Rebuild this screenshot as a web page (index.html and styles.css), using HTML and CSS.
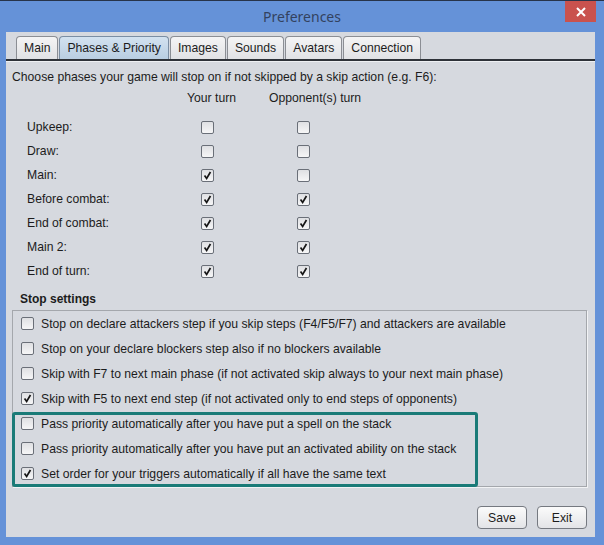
FILE: index.html
```html
<!DOCTYPE html>
<html>
<head>
<meta charset="utf-8">
<link rel="stylesheet" href="styles.css">
</head>
<body>
<div class="window">
  <div class="titlebar">
    <div></div>
    <div class="title">Preferences</div>
    <div class="close"><svg width="10" height="10" viewBox="0 0 10 10"><path d="M1 1L9 9M9 1L1 9" stroke="#fff" stroke-width="2"/></svg></div>
  </div>
  <div class="content">
    <div class="tabs">
      <div class="tab">Main</div>
      <div class="tab active">Phases &amp; Priority</div>
      <div class="tab">Images</div>
      <div class="tab">Sounds</div>
      <div class="tab">Avatars</div>
      <div class="tab">Connection</div>
    </div>
    <div class="panel">
      <div class="intro">Choose phases your game will stop on if not skipped by a skip action (e.g. F6):</div>
      <div class="heads"><span class="h1">Your turn</span><span class="h2">Opponent(s) turn</span></div>
      <div class="phases">
        <div class="lbl">Upkeep:</div><span class="cb"></span><span class="cb"></span>
        <div class="lbl">Draw:</div><span class="cb"></span><span class="cb"></span>
        <div class="lbl">Main:</div><span class="cb"><svg viewBox="0 0 13 13"><path d="M3 6.4L5.5 10L10 2.4" /></svg></span><span class="cb"></span>
        <div class="lbl">Before combat:</div><span class="cb"><svg viewBox="0 0 13 13"><path d="M3 6.4L5.5 10L10 2.4" /></svg></span><span class="cb"><svg viewBox="0 0 13 13"><path d="M3 6.4L5.5 10L10 2.4" /></svg></span>
        <div class="lbl">End of combat:</div><span class="cb"><svg viewBox="0 0 13 13"><path d="M3 6.4L5.5 10L10 2.4" /></svg></span><span class="cb"><svg viewBox="0 0 13 13"><path d="M3 6.4L5.5 10L10 2.4" /></svg></span>
        <div class="lbl">Main 2:</div><span class="cb"><svg viewBox="0 0 13 13"><path d="M3 6.4L5.5 10L10 2.4" /></svg></span><span class="cb"><svg viewBox="0 0 13 13"><path d="M3 6.4L5.5 10L10 2.4" /></svg></span>
        <div class="lbl">End of turn:</div><span class="cb"><svg viewBox="0 0 13 13"><path d="M3 6.4L5.5 10L10 2.4" /></svg></span><span class="cb"><svg viewBox="0 0 13 13"><path d="M3 6.4L5.5 10L10 2.4" /></svg></span>
      </div>
      <div class="stop-title">Stop settings</div>
      <div class="stop-box">
        <div class="opt"><span class="cb"></span>Stop on declare attackers step if you skip steps (F4/F5/F7) and attackers are available</div>
        <div class="opt"><span class="cb"></span>Stop on your declare blockers step also if no blockers available</div>
        <div class="opt"><span class="cb"></span>Skip with F7 to next main phase (if not activated skip always to your next main phase)</div>
        <div class="opt"><span class="cb"><svg viewBox="0 0 13 13"><path d="M3 6.4L5.5 10L10 2.4" /></svg></span>Skip with F5 to next end step (if not activated only to end steps of opponents)</div>
        <div class="highlight">
          <div class="opt"><span class="cb"></span>Pass priority automatically after you have put a spell on the stack</div>
          <div class="opt"><span class="cb"></span>Pass priority automatically after you have put an activated ability on the stack</div>
          <div class="opt"><span class="cb"><svg viewBox="0 0 13 13"><path d="M3 6.4L5.5 10L10 2.4" /></svg></span>Set order for your triggers automatically if all have the same text</div>
        </div>
      </div>
      <div class="buttons">
        <button class="btn">Save</button>
        <button class="btn">Exit</button>
      </div>
    </div>
  </div>
</div>
</body>
</html>
```

FILE: styles.css
```css
* { box-sizing: border-box; }
html, body { margin: 0; padding: 0; }
body {
  background: #6592d8;
  font-family: "Liberation Sans", Arial, sans-serif;
  font-size: 12.2px;
  color: #1c1c1c;
}
.window {
  width: 604px;
  height: 545px;
  border-top: 1px solid #27344a;
  background: #6592d8;
}
.titlebar {
  height: 31px;
  display: grid;
  grid-template-columns: 1fr auto 1fr;
  align-items: start;
}
.title {
  font-family: "Noto Sans", sans-serif;
  font-size: 14px;
  color: #33425f;
  line-height: 32px;
}
.close {
  justify-self: end;
  margin-right: 8px;
  width: 31px;
  height: 21px;
  background: #c9524e;
  display: flex;
  align-items: center;
  justify-content: center;
}
.close svg { display: block; }
.content {
  margin: 0 9px 0 6px;
  height: 505px;
  background: #d6d9df;
  display: flex;
  flex-direction: column;
}
.tabs {
  display: flex;
  padding: 4px 0 0 10px;
  height: 29px;
  border-bottom: 2px solid #2e3238;
  align-items: flex-end;
  gap: 1px;
}
.tab {
  height: 23px;
  padding: 0 7px;
  line-height: 22px;
  border: 1px solid #8b8e94;
  border-bottom: none;
  border-radius: 4px 4px 0 0;
  background: linear-gradient(#f4f4f5, #e1e2e5);
  color: #1c1c1c;
}
.tab.active {
  background: linear-gradient(#d3e2f0, #b9cee2);
  border-color: #7b8ea3;
}
.panel {
  flex: 1;
  border-top: 1px solid #eef0f3;
  padding: 0 8px 0 6px;
  display: flex;
  flex-direction: column;
}
.intro {
  margin-top: 8px;
  line-height: 14px;
}
.heads {
  display: flex;
  margin-top: 7px;
  line-height: 14px;
  padding-left: 175px;
}
.h1 { width: 82px; }
.phases {
  margin-top: 10px;
  padding-left: 15px;
  display: grid;
  grid-template-columns: 174px 96px 96px;
  grid-auto-rows: 24px;
  align-items: center;
}
.cb {
  width: 13px;
  height: 13px;
  border: 1px solid #6a6f78;
  border-radius: 2px;
  background: linear-gradient(#dfe0e3, #f6f6f7);
  display: inline-block;
  flex: none;
}
.cb svg {
  display: block;
  width: 11px;
  height: 11px;
  fill: none;
  stroke: #161616;
  stroke-width: 2;
}
.stop-title {
  margin-top: 9px;
  padding-left: 8px;
  font-weight: bold;
  line-height: 14px;
  font-size: 12px;
}
.stop-box {
  margin-top: 4px;
  border: 1px solid #a4a7ac;
  box-shadow: 1px 1px 0 #f2f3f5;
  padding-left: 8px;
}
.opt {
  height: 25px;
  display: flex;
  align-items: center;
  gap: 7px;
}
.highlight {
  position: relative;
}
.highlight::after {
  content: "";
  position: absolute;
  top: 1px;
  bottom: -1px;
  left: -9px;
  width: 460px;
  border: 3px solid #1a7b78;
  border-radius: 3px;
}
.buttons {
  margin-top: 19px;
  display: flex;
  justify-content: flex-end;
  gap: 10px;
}
.btn {
  width: 50px;
  height: 23px;
  font-family: "Liberation Sans", Arial, sans-serif;
  font-size: 12.2px;
  color: #1c1c1c;
  border: 1px solid #757980;
  border-radius: 4px;
  background: linear-gradient(#fbfbfb, #e3e4e7);
  padding: 0;
}
```
